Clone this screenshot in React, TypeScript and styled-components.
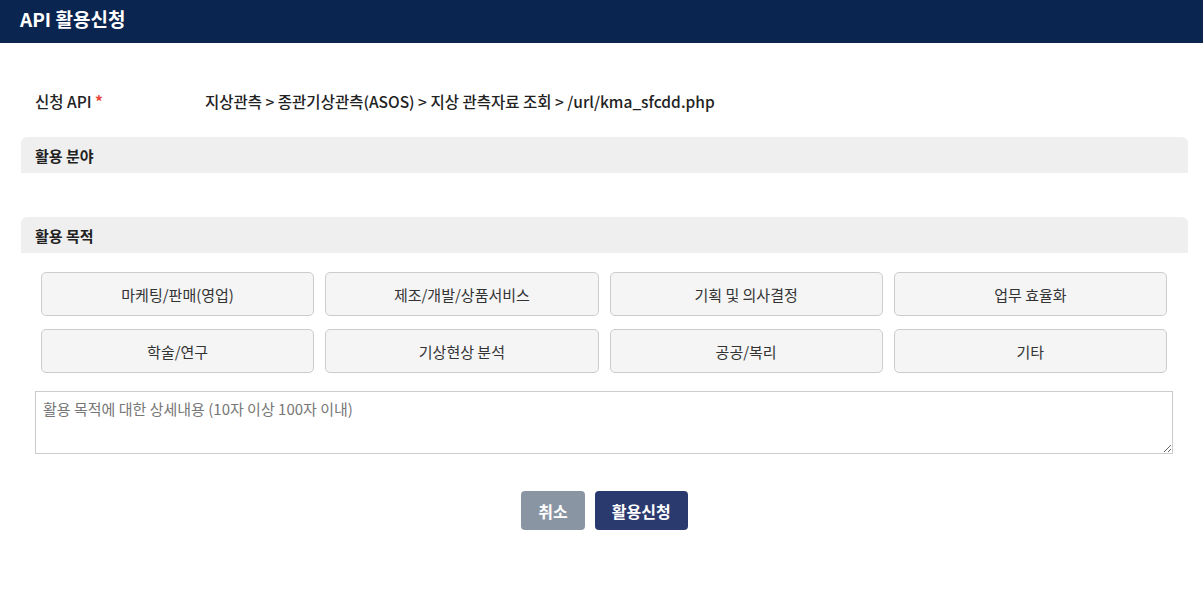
import React from 'react'
import styled, { createGlobalStyle } from 'styled-components'

const GlobalStyle = createGlobalStyle`
	html, body {
		margin: 0;
		padding: 0;
		background: #ffffff;
		font-family: 'Noto Sans CJK KR', 'Noto Sans', sans-serif;
		color: #222222;
	}
`

const purposes = [
	'마케팅/판매(영업)',
	'제조/개발/상품서비스',
	'기획 및 의사결정',
	'업무 효율화',
	'학술/연구',
	'기상현상 분석',
	'공공/복리',
	'기타',
]

const App: React.FC = () => {
	return (
		<>
			<GlobalStyle />
			<StyledHeader>
				<StyledTitle>API 활용신청</StyledTitle>
			</StyledHeader>
			<StyledBody>
				<StyledApiRow>
					<StyledLabel>
						신청 API <StyledRequired>*</StyledRequired>
					</StyledLabel>
					<StyledApiValue>지상관측 &gt; 종관기상관측(ASOS) &gt; 지상 관측자료 조회 &gt; /url/kma_sfcdd.php</StyledApiValue>
				</StyledApiRow>

				<StyledSectionHead>활용 분야</StyledSectionHead>
				<StyledSectionGap />

				<StyledSectionHead>활용 목적</StyledSectionHead>
				<StyledPurposeGrid>
					{purposes.map((p) => (
						<StyledPurposeButton key={p} type="button">
							{p}
						</StyledPurposeButton>
					))}
				</StyledPurposeGrid>
				<StyledTextarea placeholder="활용 목적에 대한 상세내용 (10자 이상 100자 이내)" />

				<StyledActions>
					<StyledActionButton type="button" variant="cancel">취소</StyledActionButton>
					<StyledActionButton type="button" variant="submit">활용신청</StyledActionButton>
				</StyledActions>
			</StyledBody>
		</>
	)
}

const StyledHeader = styled.div`
	height: 43px;
	background: #0a2550;
	display: flex;
	align-items: center;
	padding: 0 20px;
	box-sizing: border-box;
`

const StyledTitle = styled.h1`
	margin: 0;
	color: #ffffff;
	font-size: 19px;
	font-weight: 700;
	position: relative;
	top: -3px;
`

const StyledBody = styled.div`
	padding: 43px 15px 0 21px;
`

const StyledApiRow = styled.div`
	display: flex;
	align-items: center;
	height: 30px;
	padding-left: 14px;
	margin-bottom: 21px;
`

const StyledLabel = styled.div`
	width: 170px;
	font-size: 15.5px;
	font-weight: 500;
	color: #222222;
`

const StyledRequired = styled.span`
	color: #e8473a;
	font-weight: 700;
`

const StyledApiValue = styled.div`
	font-size: 15.5px;
	font-weight: 500;
	color: #222222;
`

const StyledSectionHead = styled.div`
	height: 36px;
	background: #efefef;
	border-radius: 6px 6px 0 0;
	padding-left: 14px;
	display: flex;
	align-items: center;
	font-size: 15px;
	font-weight: 700;
	color: #222222;
`

const StyledSectionGap = styled.div`
	height: 44px;
`

const StyledPurposeGrid = styled.div`
	display: grid;
	grid-template-columns: repeat(4, 1fr);
	column-gap: 11px;
	row-gap: 13px;
	padding: 19px 21px 0 20px;
`

const StyledPurposeButton = styled.button`
	height: 44px;
	background: #f5f5f5;
	border: 1px solid #cccccc;
	border-radius: 5px;
	font-family: 'Noto Sans CJK KR', 'Noto Sans', sans-serif;
	font-size: 15px;
	color: #333333;
	cursor: pointer;
`

const StyledTextarea = styled.textarea`
	display: block;
	box-sizing: border-box;
	width: calc(100% - 29px);
	height: 63px;
	margin: 18px 0 0 14px;
	padding: 6px 7px;
	border: 1px solid #cccccc;
	border-radius: 0;
	font-family: 'Noto Sans CJK KR', 'Noto Sans', sans-serif;
	font-size: 15px;
	color: #333333;
	&::placeholder {
		color: #777777;
	}
`

const StyledActions = styled.div`
	display: flex;
	justify-content: center;
	gap: 10px;
	margin-top: 37px;
`

const StyledActionButton = styled.button<{ variant: 'cancel' | 'submit' }>`
	height: 39px;
	padding: 0 17px;
	border: none;
	border-radius: 4px;
	background: ${(props) => (props.variant === 'cancel' ? '#8a95a3' : '#2b3a6e')};
	color: #ffffff;
	font-family: 'Noto Sans CJK KR', 'Noto Sans', sans-serif;
	font-size: 16px;
	font-weight: 700;
	cursor: pointer;
`

export default App
